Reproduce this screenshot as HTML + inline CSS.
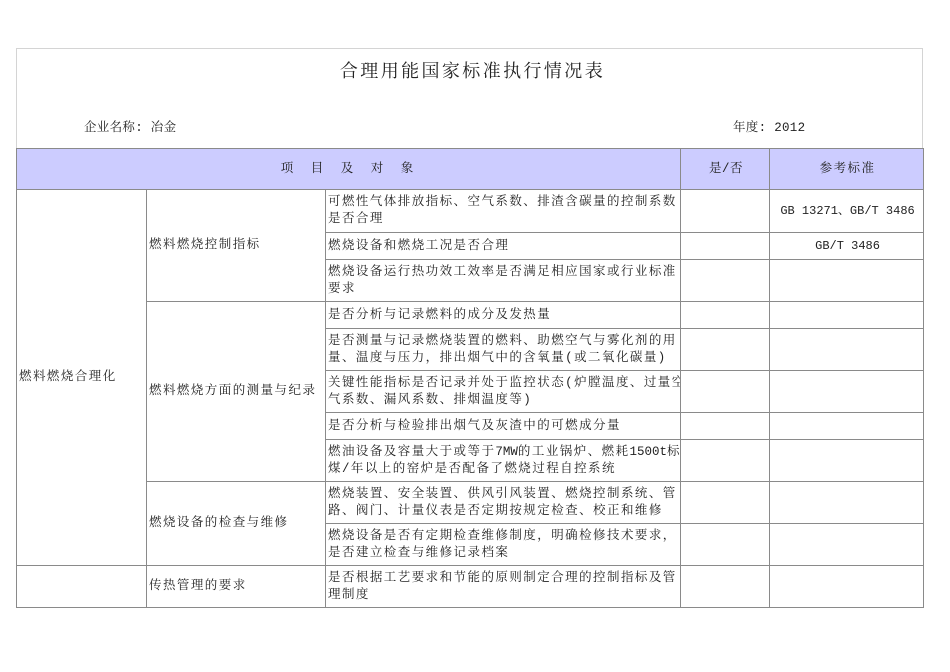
<!DOCTYPE html>
<html><head><meta charset="utf-8"><style>
body{margin:0;width:950px;height:672px;background:#fff;position:relative;overflow:hidden;font-family:"Liberation Mono","Noto Serif CJK SC",serif;color:#222}
.frame{position:absolute;left:16px;top:48px;width:907px;height:100px;border:1px solid #d4d4d4;border-bottom:none;box-sizing:border-box}
.title{position:absolute;left:0;width:945px;top:57px;text-align:center;font-size:18px;letter-spacing:2.4px}
.l{position:absolute;top:117px;font-size:12.5px;letter-spacing:0.3px}
table{position:absolute;left:16px;top:148px;border-collapse:collapse;table-layout:fixed;width:907px}
td{border:1.5px solid #8a8a8a;font-size:12.5px;letter-spacing:1.45px;line-height:17px;padding:0 0 0 2px;vertical-align:middle;overflow:hidden;white-space:nowrap}
tr.h td{background:#ccccff;text-align:center;height:40px}
.c{text-align:center;letter-spacing:0;font-size:12px}
</style></head><body>
<div class="frame"></div>
<div class="title">合理用能国家标准执行情况表</div>
<div class="l" style="left:84px">企业名称: 冶金</div>
<div class="l" style="left:733px">年度: 2012</div>
<table>
<colgroup><col style="width:130px"><col style="width:179px"><col style="width:355px"><col style="width:89px"><col style="width:154px"></colgroup>
<tr class="h"><td colspan="3" style="letter-spacing:5px">项 目 及 对 象</td><td style="letter-spacing:0.5px">是/否</td><td>参考标准</td></tr>
<tr style="height:43px"><td rowspan="10">燃料燃烧合理化</td><td rowspan="3">燃料燃烧控制指标</td><td>可燃性气体排放指标、空气系数、排渣含碳量的控制系数<br>是否合理</td><td></td><td class="c">GB 13271、GB/T 3486</td></tr>
<tr style="height:27px"><td>燃烧设备和燃烧工况是否合理</td><td></td><td class="c">GB/T 3486</td></tr>
<tr style="height:42px"><td>燃烧设备运行热功效工效率是否满足相应国家或行业标准<br>要求</td><td></td><td></td></tr>
<tr style="height:27px"><td rowspan="5">燃料燃烧方面的测量与纪录</td><td>是否分析与记录燃料的成分及发热量</td><td></td><td></td></tr>
<tr style="height:42px"><td>是否测量与记录燃烧装置的燃料、助燃空气与雾化剂的用<br>量、温度与压力，排出烟气中的含氧量(或二氧化碳量)</td><td></td><td></td></tr>
<tr style="height:42px"><td>关键性能指标是否记录并处于监控状态(炉膛温度、过量空<br>气系数、漏风系数、排烟温度等)</td><td></td><td></td></tr>
<tr style="height:27px"><td>是否分析与检验排出烟气及灰渣中的可燃成分量</td><td></td><td></td></tr>
<tr style="height:42px"><td>燃油设备及容量大于或等于<span style="letter-spacing:0">7MW</span>的工业锅炉、燃耗<span style="letter-spacing:0">1500t</span>标<br>煤/年以上的窑炉是否配备了燃烧过程自控系统</td><td></td><td></td></tr>
<tr style="height:42px"><td rowspan="2">燃烧设备的检查与维修</td><td>燃烧装置、安全装置、供风引风装置、燃烧控制系统、管<br>路、阀门、计量仪表是否定期按规定检查、校正和维修</td><td></td><td></td></tr>
<tr style="height:42px"><td>燃烧设备是否有定期检查维修制度，明确检修技术要求，<br>是否建立检查与维修记录档案</td><td></td><td></td></tr>
<tr style="height:42px"><td></td><td>传热管理的要求</td><td>是否根据工艺要求和节能的原则制定合理的控制指标及管<br>理制度</td><td></td><td></td></tr>
</table>
</body></html>
